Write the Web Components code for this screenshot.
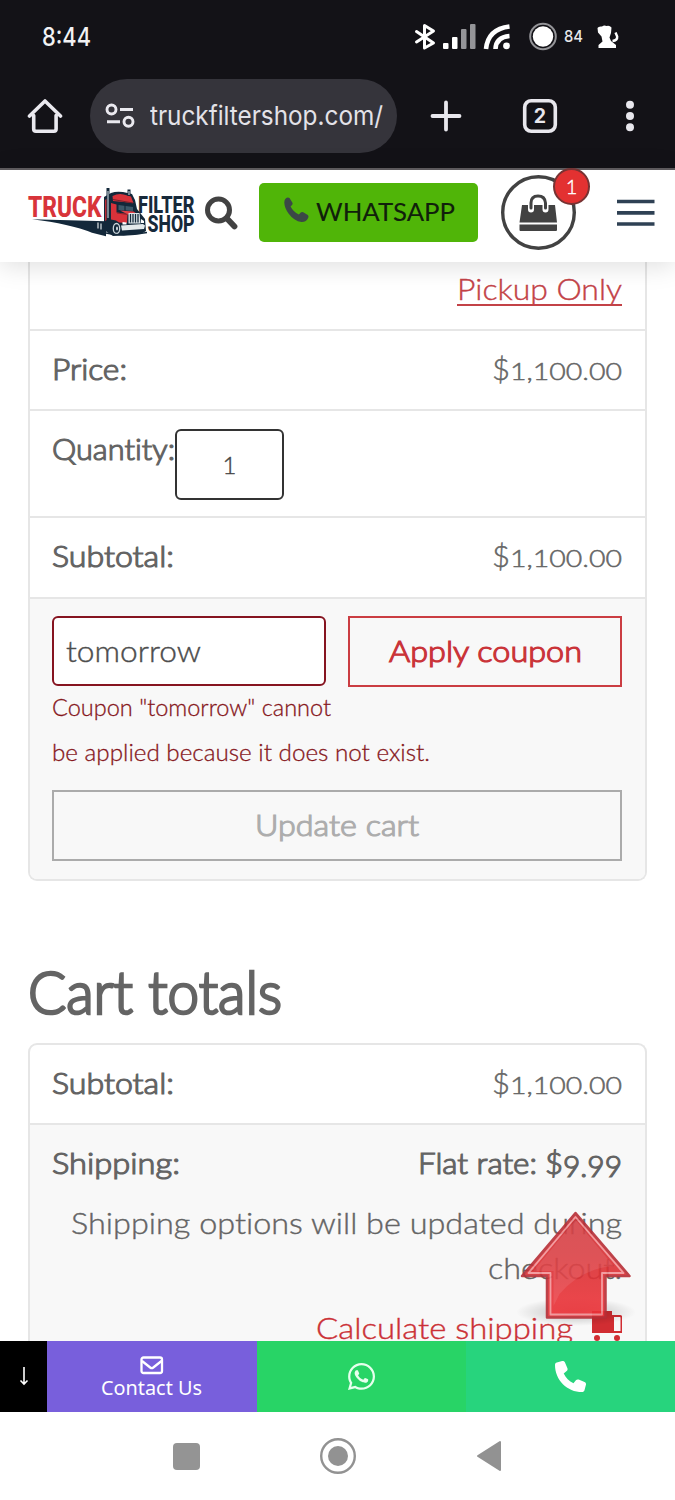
<!DOCTYPE html>
<html lang="en">
<head>
<meta charset="utf-8">
<title>Cart</title>
<style>
body{margin:0;background:#fff;width:675px;height:1500px;overflow:hidden}
</style>
</head>
<body>
<shop-screen></shop-screen>
<script>
const define=(name,html)=>customElements.define(name,class extends HTMLElement{
  constructor(){super();this.attachShadow({mode:'open'}).innerHTML=html;}
});

/* Text stretched to a fixed advance width */
customElements.define('fit-text',class extends HTMLElement{
  constructor(){super();this.attachShadow({mode:'open'}).innerHTML='<style>:host{display:inline-block;white-space:nowrap;text-align:left}span{display:inline-block;transform-origin:0 50%}</style><span><slot></slot></span>';}
  connectedCallback(){
    const w=parseFloat(this.getAttribute('w')),s=this.shadowRoot.querySelector('span');
    this.style.width=w+'px';
    s.style.transform='scaleX('+w/s.getBoundingClientRect().width+')';
  }
});

define('status-bar',`<style>
:host{display:flex;height:74px;box-sizing:border-box;align-items:center;padding:0 56px 0 42px;color:#f2f2f4;font:500 25px/30px Inter,sans-serif;justify-content:space-between}
svg{display:block}
</style><fit-text w="49">8:44</fit-text>
<svg width="206" height="30" viewBox="413 22 206 30" fill="#fff">
<path d="M416.500 31.500l17 11.500-9 5V25.500l9 5.500-17 11" fill="none" stroke="#fff" stroke-width="3" stroke-linejoin="round" stroke-linecap="round"/>
<rect x="443" y="43" width="5.500" height="6" rx="1"/><rect x="452" y="37" width="5.500" height="12" rx="1"/>
<g fill="#949498"><rect x="461" y="29" width="5.500" height="20" rx="1"/><rect x="470" y="24" width="5.500" height="25" rx="1"/></g>
<g fill="none" stroke="#fff" stroke-width="4.600"><path d="M486 49Q488 29 509.500 26.500M495.500 49Q496 37 509.500 36"/></g><circle cx="506.500" cy="45.800" r="3.400"/>
<circle cx="543" cy="36.500" r="12.800" fill="none" stroke="#949498" stroke-width="2"/><circle cx="543" cy="36.500" r="10.200"/>
<text x="564" y="42" font-family="Inter,sans-serif" font-size="16" font-weight="500" textLength="19" lengthAdjust="spacingAndGlyphs" fill="#e8e8ea">84</text>
<path d="M597.500 28q1-2 4.500-1.500 2-1.500 4.500-.5 3-1 5 1.500l-.5 5.500-1.500 4.500 1.500 3.500 5 4v3h-17.500v-3l4-3.500-1-5-3.500-4z"/><path d="M612.500 41q5-.5 4.700-4.500l-1.700-4" fill="none" stroke="#fff" stroke-width="2.400"/>
</svg>`);

define('browser-bar',`<style>
:host{display:flex;height:94px;box-sizing:border-box;padding:0 38px 10px 27px;align-items:center}
svg{display:block}
.url{display:flex;align-items:center;gap:15px;width:307px;height:74px;border-radius:37px;box-sizing:border-box;padding-left:15px;background:#35343b;color:#e3e2e8;font:400 26px/34px Inter,sans-serif;margin:0 32px 0 27px}
.sp{flex:1}
</style>
<svg width="36" height="38" viewBox="27 97 36 38" fill="none" stroke="#eae9ef" stroke-width="3.600" stroke-linecap="round" stroke-linejoin="round"><path d="M33.700 115.500V129q0 2.200 2.200 2.200h18q2.200 0 2.200-2.200v-13.500M29.500 116L45 101l15.500 15"/></svg>
<div class="url"><svg width="30" height="26" viewBox="0 0 30 26" fill="none" stroke="#eae9ef" stroke-width="2.900"><circle cx="6.500" cy="6.500" r="4.500"/><path d="M15 6.500h13M2 18.800h13"/><circle cx="23.500" cy="18.800" r="4.500"/></svg><fit-text w="233">truckfiltershop.com/</fit-text></div>
<svg width="34" height="34" viewBox="-17 -17 34 34" stroke="#e8e7ed" stroke-width="3.800" stroke-linecap="round"><path d="M-13.500 0h27M0-13.500v27"/></svg>
<svg style="margin-left:59px" width="36" height="36" viewBox="-18 -18 36 36"><rect x="-15.300" y="-15.300" width="30.600" height="30.600" rx="6.500" fill="none" stroke="#e8e7ed" stroke-width="3.600"/><text y="7" text-anchor="middle" font-family="Inter,sans-serif" font-size="19.500" font-weight="700" fill="#e8e7ed">2</text></svg>
<span class="sp"></span>
<svg style="margin-right:-1px" width="16" height="34" viewBox="-8 -17 16 34" fill="#e8e7ed"><circle cy="-11.300" r="4"/><circle r="4"/><circle cy="11.300" r="4"/></svg>`);

define('truck-logo',`<style>:host{display:block}svg{display:block}</style>
<svg width="170" height="54" viewBox="27 186 170 54">
<path d="M32 219.300l74 2v15l-14-3.500q-22-9-60-13.500z" fill="#13283a"/>
<path d="M104 197l7-4q5-2 12-1l9 2 3 6 2 9 8 10 1 12-5 3-28 2-9-6z" fill="#13283a"/>
<path d="M112.500 196q6-3 11-1.500l7.500 2 2.500 6.500-20.500-2z" fill="#d8323a"/>
<path d="M113 199.500l20 3.500" stroke="#7c2129" stroke-width="1"/>
<path d="M105 200l4-3v22l-4 2z" fill="#b92a34"/>
<path d="M111 203l5.500 1.500v8l11 1.500-.5 9-8-.5-3-2-5-1z" fill="#d8323a"/>
<path d="M117 213l10.500 1.500" stroke="#8c222c" stroke-width="1"/>
<path d="M118.500 205l14.500 2v4l-14.500-1z" fill="#3d5868"/><path d="M125 205v6" stroke="#13283a" stroke-width="1.200"/>
<path d="M120 210.500l13.500 1 3.500 2.500-9 .5z" fill="#e24047"/>
<path d="M128.500 213h11l1 10.500h-12z" fill="#dbe3e7"/><path d="M130.500 214v8.500m2.500-8.500v8.500m2.500-8.500v8.500m2.500-8.500v8.500" stroke="#13283a" stroke-width="1.300"/>
<path d="M121 225.500l22-1.500 2 1.500-1 3.500-22 1.500z" fill="#e3e9eb"/><path d="M122.500 222l4 .5v2h-4zM141 219l3 2v2h-3z" fill="#fff"/>
<ellipse cx="116.500" cy="228.500" rx="3.200" ry="5" fill="#13283a" stroke="#cbd5da" stroke-width="1.300"/><ellipse cx="117" cy="228.500" rx="1" ry="2" fill="#cbd5da"/>
<path d="M108 221v-33M129 196v-6.500" stroke="#13283a" stroke-width="3"/><path d="M108 218v-27M129 195v-4" stroke="#b9c5cc" stroke-width="1.200"/>
<path d="M98 222.500v6m3-5v6" stroke="#dfe4e6" stroke-width="1.200"/>
<path d="M106 233q17 4 41-.5" fill="none" stroke="#13283a" stroke-width="1.500"/>
<g font-family="Roboto,sans-serif" font-weight="800">
<text x="28" y="216.800" font-size="29" fill="#d8343a" textLength="73.500" lengthAdjust="spacingAndGlyphs">TRUCK</text>
<text x="138" y="212.800" font-size="23.500" fill="#17293a" textLength="56.500" lengthAdjust="spacingAndGlyphs">FILTER</text>
<text x="147.500" y="232.300" font-size="24" fill="#17293a" textLength="47" lengthAdjust="spacingAndGlyphs">SHOP</text></g>
</svg>`);

define('shop-header',`<style>
:host{display:flex;position:relative;z-index:2;height:94px;box-sizing:border-box;border-top:2px solid #5d5a5d;background:#fff;box-shadow:0 4px 24px rgba(0,0,0,.13);padding:0 20px 0 27px;align-items:center}
svg{display:block}
.wa{display:flex;align-items:center;gap:7px;width:219px;height:59px;margin:-8px 22.500px 0 20px;border-radius:5px;background:#50b508;color:#10200b;box-sizing:border-box;padding-left:25px;font:400 25px/34px Lato,sans-serif;-webkit-text-stroke:.1px}
.wa fit-text{margin-top:-2px}.wa svg{margin-top:-4px}
.bag{position:relative;width:75px;height:75px;margin-top:-7px}
.n{position:absolute;left:52.500px;top:-7.500px;width:33px;height:33px;border-radius:50%;border:2px solid #733;background:#e33131;color:#fff;font:300 20px/33px Lato,sans-serif;text-align:center}
.menu{margin-left:auto}
</style>
<truck-logo style="margin-top:-7px"></truck-logo>
<svg style="margin:-7px 0 0 7px" width="35" height="36" viewBox="0 0 35 36" fill="none" stroke="#424242"><circle cx="14.500" cy="15" r="11" stroke-width="5"/><path d="M22.500 23l8 8.500" stroke-width="5.800" stroke-linecap="round"/></svg>
<div class="wa"><svg width="25" height="26" viewBox="0 0 25 26"><path d="M1.500 1.800Q3.500-.2 5.500 1l2.800 4.500q.8 1.600-.5 2.800L6.600 9.600q2.400 5 8.300 8l1.600-1.900q1.200-1.200 2.700-.5l4.600 2.900q1.200 1 .3 3-1.800 4.200-6.600 4Q10 24 4.500 16.500.2 10 .3 5.200.5 2.800 1.500 1.800z" fill="#3b4846"/></svg><fit-text w="139">WHATSAPP</fit-text></div>
<div class="bag"><svg width="75" height="75" viewBox="0 0 75 75"><circle cx="37.500" cy="37.500" r="35.800" fill="#fff" stroke="#424242" stroke-width="3.400"/><path d="M21 30h33l2 17.500H18.500zM18.500 49.500H56V55q0 1-1 1H19.500q-1 0-1-1z" fill="#424242"/><path d="M30 34.500V28q0-7.500 7-7.500t7.500 7.500v6.500" fill="none" stroke="#fff" stroke-width="6" stroke-linecap="round"/><path d="M30 33v-5q0-7 7-7t7.500 7v5" fill="none" stroke="#424242" stroke-width="3" stroke-linecap="round"/></svg><span class="n">1</span></div>
<svg class="menu" style="margin-top:-6px" width="39" height="28" viewBox="0 0 39 28"><path d="M1 2.500h37.500M1 13.800h37.500M1 25h37.500" stroke="#2f4154" stroke-width="3.700"/></svg>`);

define('old-price',`<style>:host{display:inline-flex;align-items:baseline;color:#666;line-height:40px;-webkit-text-stroke:.5px}.s{font-size:24px}</style><fit-text w="18">$</fit-text><fit-text class="s" w="112">1,100.00</fit-text>`);

define('data-row',`<style>:host{display:flex;justify-content:space-between;height:80px;box-sizing:border-box;padding:17px 23px 0 22px;border-bottom:2px solid #e6e6e6}
.l{-webkit-text-stroke:1.200px #646464;color:#646464}</style><span class="l"><slot name="label"></slot></span><slot></slot>`);

define('coupon-panel',`<style>
:host{display:block;box-sizing:border-box;height:280px;background:#f8f8f8;padding:17px 23px 0 22px}
.r{display:grid;grid-template-columns:274px 274px;gap:22px;align-items:start}
.in{height:70px;box-sizing:border-box;border:2px solid #861420;border-radius:6px;background:#fff;color:#4d4d4d;padding:0 12px;line-height:65px;font-size:30px}
.b{height:71px;box-sizing:border-box;border:2px solid #cb3d42;color:#ca3439;text-align:center;line-height:64px;-webkit-text-stroke:1.200px}
.e{margin-top:-2px;color:#86171c;font-size:23px;line-height:45px;-webkit-text-stroke:.3px}
.u{margin-top:15px;border-color:#ababab;color:#adadad}
</style>
<div class="r"><div class="in"><fit-text w="135">tomorrow</fit-text></div><div class="b"><fit-text w="193">Apply coupon</fit-text></div></div>
<div class="e"><fit-text w="279">Coupon "tomorrow" cannot</fit-text><br><fit-text w="378">be applied because it does not exist.</fit-text></div>
<div class="b u"><fit-text w="164">Update cart</fit-text></div>`);

define('cart-items',`<style>
:host{display:block;width:619px;margin-left:28px;border:2px solid #e6e6e6;border-top:0;box-sizing:border-box;border-radius:0 0 9px 9px;overflow:hidden}
.pick{height:67px;box-sizing:content-box;border-bottom:2px solid #e6e6e6;text-align:right;padding-right:23px;line-height:52px;color:#c34247}
.pick u{text-decoration:none;border-bottom:2px solid #c34247;display:inline-block;line-height:31px;height:31px;margin-top:10px}
.q{height:107px;justify-content:flex-start}
.box{width:109px;height:71px;margin-top:1px;box-sizing:border-box;border:2px solid #333;border-radius:6px;text-align:center;font-size:24px;line-height:67px;color:#444}
</style>
<div class="pick"><u><fit-text w="165">Pickup Only</fit-text></u></div>
<data-row><fit-text slot="label" w="75">Price:</fit-text><old-price></old-price></data-row>
<data-row class="q"><fit-text slot="label" w="123">Quantity:</fit-text><div class="box">1</div></data-row>
<data-row style="height:81px"><fit-text slot="label" w="122">Subtotal:</fit-text><old-price></old-price></data-row>
<coupon-panel></coupon-panel>`);

define('cart-totals',`<style>
:host{display:block;width:619px;margin:82px 0 0 28px}
h2{margin:0;font:300 59px/58px Lato,sans-serif;color:#646464;-webkit-text-stroke:2.700px;height:80px}
.box{border:2px solid #e6e6e6;border-bottom:0;border-radius:9px 9px 0 0;overflow:hidden}
.ship{background:#f8f8f8;height:215px;padding:17px 23px 0 22px;color:#646464}
.a{display:flex;justify-content:space-between;-webkit-text-stroke:1.200px;line-height:40px;height:40px}
.old{font-size:29px;position:relative;top:3px}
.t{text-align:right;line-height:45px;margin-top:18px}
.c{display:flex;justify-content:flex-end;align-items:center;gap:18px;color:#cb3036;height:44px;margin-top:15px;line-height:44px}
</style>
<h2><fit-text w="254">Cart totals</fit-text></h2>
<div class="box"><data-row><fit-text slot="label" w="122">Subtotal:</fit-text><old-price></old-price></data-row>
<div class="ship"><div class="a"><fit-text w="128">Shipping:</fit-text><span><fit-text w="119">Flat rate:</fit-text><span style="display:inline-block;width:8px"></span><fit-text w="18">$</fit-text><fit-text class="old" w="59">9.99</fit-text></span></div>
<div class="t"><fit-text w="551">Shipping options will be updated during</fit-text><br><fit-text w="134">checkout.</fit-text></div>
<div class="c"><fit-text w="257">Calculate shipping</fit-text><svg style="margin-top:-2px" width="31" height="30" viewBox="0 0 31 30" fill="#d12d32"><path d="M1 0h20v22H1z"/><path d="M22 5h7q1.500 0 1.500 2v14H22z" fill="none" stroke="#d12d32" stroke-width="2"/><circle cx="6" cy="27" r="3"/><circle cx="26" cy="27" r="3"/></svg></div></div></div>`);

define('scroll-top',`<style>:host{display:block;position:absolute;left:513px;top:1206px;z-index:1}svg{display:block}</style>
<svg width="126" height="122" viewBox="513 1206 126 122"><defs><linearGradient id="g" x2="0" y2="1"><stop stop-color="#cf3035"/><stop offset=".45" stop-color="#da3034"/><stop offset="1" stop-color="#f0343a"/></linearGradient><radialGradient id="s"><stop stop-color="#000" stop-opacity=".25"/><stop offset="1" stop-color="#000" stop-opacity="0"/></radialGradient></defs>
<ellipse cx="576" cy="1312" rx="60" ry="14" fill="url(#s)"/>
<g stroke-linejoin="round" opacity=".9"><path d="M575.500 1213l54 63h-24v41.500h-58.500V1276h-25z" fill="url(#g)" stroke="#b72f37" stroke-width="2.500"/><path d="M575.500 1217l48 56h-21.500v41.500h-51.500V1273h-22z" fill="none" stroke="#f39498" stroke-width="1.800"/><path d="M575.500 1220l38 46q-33 3-54 28l-6 12v-35h-20z" fill="#fff" opacity=".09"/></g></svg>`);

define('contact-bar',`<style>
:host{display:grid;grid-template-columns:47px 210px 209px 209px;height:71px;position:relative;z-index:3;color:#fff}
div{display:flex;flex-direction:column;align-items:center;justify-content:center}
svg{display:block}
</style>
<div style="background:#000"><svg width="10" height="21" viewBox="0 0 10 21" fill="none" stroke="#fff" stroke-width="1.600"><path d="M5 1v17M1.500 14.500L5 18l3.500-3.500"/></svg></div>
<div style="background:#785fdc;font:400 20px/26px 'Noto Sans',sans-serif;justify-content:flex-start;padding-top:15px"><svg width="24" height="19" viewBox="0 0 24 19" fill="none" stroke="#fff" stroke-width="2.300"><rect x="1.500" y="1.500" width="20.500" height="15.500" rx="2"/><path d="M2 5l8.200 6.500q1.500 1.200 3.100 0L21.500 5"/></svg><fit-text style="margin:0 1px 0 0" w="101">Contact Us</fit-text></div>
<div style="background:#28d466"><svg width="27" height="27" viewBox="0 32 448 448" fill="#e6ffed"><path d="M381 97C339 55 283 32 224 32 102 32 2 132 2 254c0 39 10 77 30 111L0 480l118-31c32 18 69 27 106 27 122 0 224-100 224-222 0-59-25-115-67-157zM224 439c-33 0-66-9-94-26l-7-4-70 18 19-68-4-7C49 323 39 289 39 254c0-102 83-185 185-185 49 0 96 19 130 54 35 35 57 81 57 131 0 102-85 185-187 185z"/><path d="M325 299c-6-3-33-16-38-18s-9-3-12 3-15 18-18 22-7 4-12 1c-33-16-54-29-76-66-6-10 6-9 16-30 2-4 1-7 0-10s-13-30-17-41-9-9-13-9h-11c-4 0-10 1-15 7s-19 19-19 46 20 54 23 57 39 60 95 84c35 15 49 17 67 14 11-2 33-13 37-26s5-24 3-27-5-4-10-7z"/></svg></div>
<div style="background:#27d47d"><svg width="31" height="31" viewBox="0 0 512 512" fill="#fff"><path d="M165 25c-8-19-28-28-47-23L30 26C12 30 0 46 0 64c0 247 201 448 448 448 18 0 34-12 39-30l24-88c5-19-5-39-24-47l-96-40c-16-7-35-2-46 12l-40 49C234 335 177 278 144 207l49-40c14-11 19-30 12-46z"/></svg></div>`);

define('nav-bar',`<style>:host{display:flex;height:88px;align-items:center;justify-content:center;gap:119px;background:#fff;position:relative;z-index:3}svg{display:block}</style>
<svg width="27" height="27"><rect width="27" height="27" rx="4" fill="#949494"/></svg>
<svg width="38" height="38" viewBox="-19 -19 38 38"><circle r="16.800" fill="none" stroke="#929292" stroke-width="2.400"/><circle r="10" fill="#929292"/></svg>
<svg width="27" height="32" viewBox="0 0 27 32"><path d="M24 2v28L2 16z" fill="#929292" stroke="#929292" stroke-width="2" stroke-linejoin="round"/></svg>`);

define('shop-screen',`<style>
:host{display:grid;grid-template-rows:168px 94px 1fr 71px 88px;width:675px;height:1500px;position:relative;overflow:hidden;background:#fff;color:#646464;font:300 30px/40px Lato,sans-serif;font-variant-ligatures:none;-webkit-text-stroke:.4px}
.top{background:#131217;-webkit-text-stroke:0}
main{min-height:0;overflow:hidden}
contact-bar{-webkit-text-stroke:0}
</style>
<div class="top"><status-bar></status-bar><browser-bar></browser-bar></div>
<shop-header></shop-header>
<main><cart-items></cart-items><cart-totals></cart-totals></main>
<contact-bar></contact-bar><nav-bar></nav-bar><scroll-top></scroll-top>`);
</script>
</body>
</html>
